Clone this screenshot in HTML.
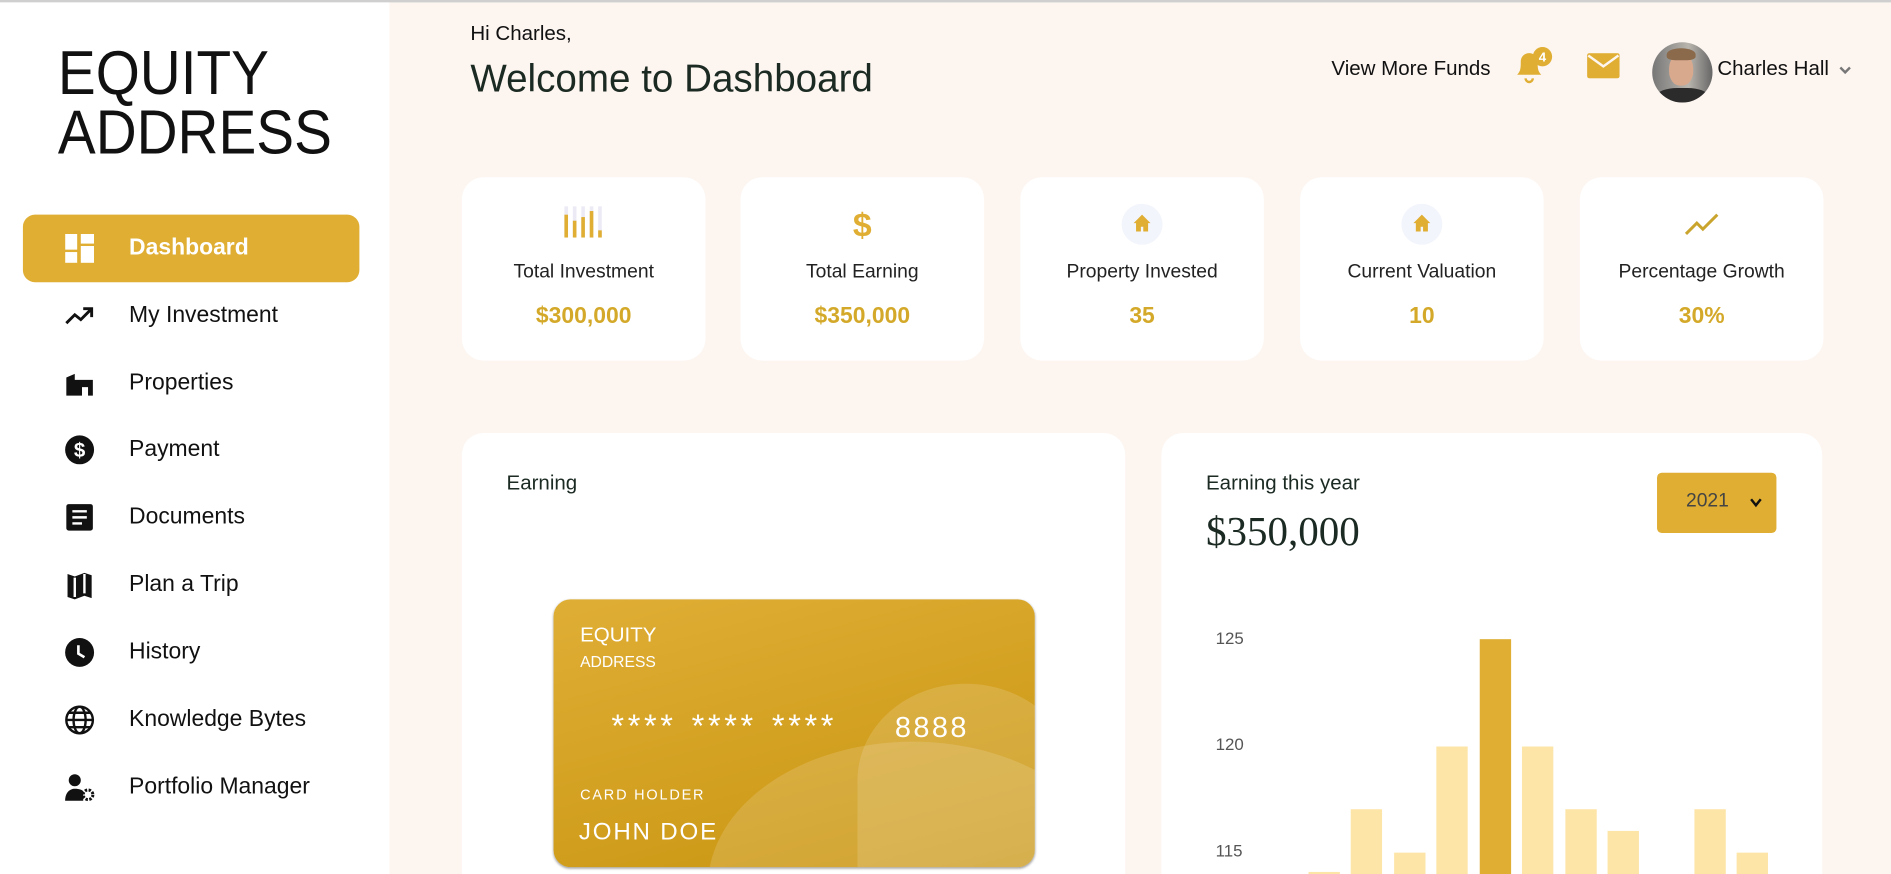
<!DOCTYPE html>
<html><head><meta charset="utf-8"><style>
*{margin:0;padding:0;box-sizing:border-box}
html,body{width:1891px;height:874px;overflow:hidden;background:#fdf5f0}
#w{position:absolute;left:0;top:0;width:1568px;height:725px;overflow:hidden;transform:scale(1.20599);transform-origin:0 0;font-family:"Liberation Sans",sans-serif;color:#111}
.a{position:absolute}
.side{left:0;top:2px;width:323px;height:723px;background:#fff}
.nav{position:absolute;left:107px;font-size:19px;color:#111;white-space:nowrap;transform:translateY(-50%)}
.ic{position:absolute;left:53px;width:26px;height:26px;transform:translateY(-50%)}
.card{position:absolute;background:#fff;border-radius:18px}
.st{top:147px;width:202px;height:152px;text-align:center}
.st .l{position:absolute;top:70px;width:100%;font-size:16px;color:#222}
.st .v{position:absolute;top:105px;width:100%;font-size:19px;font-weight:bold;color:#d4a92a}
.st svg{position:absolute;left:50%;top:24px;transform:translateX(-50%)}
.bar{position:absolute;width:26px;background:#fde5a8;bottom:0}
</style></head><body><div id="w">
<div class="a" style="left:0;top:0;width:1568px;height:2px;background:#cfcfcf"></div>
<div class="a side"></div>
<div class="a" style="left:48px;top:35px;font-size:47px;line-height:45px;color:#111;transform:scaleY(1.1);transform-origin:0 0">EQUITY<br>ADDRESS</div>
<div class="a" style="left:19px;top:178px;width:279px;height:56px;background:#dfae33;border-radius:10px"></div>
<svg class="a" style="left:54px;top:194px" width="24" height="24" viewBox="0 0 24 24" fill="#fff"><rect x="0" y="0" width="10" height="13"/><rect x="13" y="0" width="11" height="8"/><rect x="0" y="15" width="10" height="9"/><rect x="13" y="10" width="11" height="14"/></svg>
<div class="nav" style="top:206px;color:#fff;font-weight:bold">Dashboard</div>

<svg class="ic" style="top:262px" viewBox="0 0 26 26"><path d="M2 19l7-7 5 4 8-8M16 7h7v7" stroke="#111" stroke-width="2.4" fill="none"/></svg>
<div class="nav" style="top:262px">My Investment</div>
<svg class="ic" style="top:318px" viewBox="0 0 26 26" fill="#111"><path d="M2 8l7-3v18H2zM9 10h15v13h-4v-7h-5v7H9z"/></svg>
<div class="nav" style="top:318px">Properties</div>
<svg class="ic" style="top:373px" viewBox="0 0 26 26"><circle cx="13" cy="13" r="12" fill="#111"/><text x="13" y="19" font-size="17" font-weight="bold" fill="#fff" text-anchor="middle" font-family="Liberation Sans">$</text></svg>
<div class="nav" style="top:373px">Payment</div>
<svg class="ic" style="top:429px" viewBox="0 0 26 26"><rect x="2" y="2" width="22" height="22" rx="2" fill="#111"/><path d="M7 8h12M7 13h12M7 18h8" stroke="#fff" stroke-width="2"/></svg>
<div class="nav" style="top:429px">Documents</div>
<svg class="ic" style="top:485px" viewBox="0 0 26 26" fill="#111"><path d="M3 4l6 2 8-3 6 2v19l-6-2-8 3-6-2z"/><path d="M9 7v16M17 4v16" stroke="#fff" stroke-width="2"/></svg>
<div class="nav" style="top:485px">Plan a Trip</div>
<svg class="ic" style="top:541px" viewBox="0 0 26 26"><circle cx="13" cy="13" r="12" fill="#111"/><path d="M12 7v7l5 3" stroke="#fff" stroke-width="2.2" fill="none"/></svg>
<div class="nav" style="top:541px">History</div>
<svg class="ic" style="top:597px" viewBox="0 0 26 26" fill="none" stroke="#111" stroke-width="2"><circle cx="13" cy="13" r="11"/><ellipse cx="13" cy="13" rx="5" ry="11"/><path d="M2 13h22M4 7h18M4 19h18"/></svg>
<div class="nav" style="top:597px">Knowledge Bytes</div>
<svg class="ic" style="top:653px" viewBox="0 0 26 26" fill="#111"><circle cx="9" cy="7" r="5"/><path d="M1 24c0-7 4-10 8-10s6 1 7 2v8z"/><circle cx="20" cy="19" r="4" fill="none" stroke="#111" stroke-width="2.5" stroke-dasharray="2 1.2"/></svg>
<div class="nav" style="top:653px">Portfolio Manager</div>

<div class="a" style="left:390px;top:18px;font-size:17px;color:#111">Hi Charles,</div>
<div class="a" style="left:390px;top:47px;font-size:32px;color:#1b2a22">Welcome to Dashboard</div>
<div class="a" style="left:1104px;top:47px;font-size:17px;color:#111">View More Funds</div>
<svg class="a" style="left:1254px;top:38px" width="36" height="32" viewBox="0 0 36 32"><path d="M4 24c3-3 3-6 3-11a7 7 0 0 1 14 0c0 5 0 8 3 11z" fill="#dfae33"/><path d="M11 27a3 3 0 0 0 6 0" stroke="#dfae33" stroke-width="2" fill="none"/><circle cx="25" cy="9" r="8" fill="#dfae33"/><text x="25" y="13" font-size="11" font-weight="bold" fill="#fff" text-anchor="middle" font-family="Liberation Sans">4</text></svg>
<svg class="a" style="left:1316px;top:44px" width="27" height="21" viewBox="0 0 27 21"><rect width="27" height="21" rx="2" fill="#dfae33"/><path d="M1 2l12.5 9L26 2" stroke="#fdf5f0" stroke-width="2" fill="none"/></svg>
<div class="a" style="left:1370px;top:35px;width:50px;height:50px;border-radius:50%;background:linear-gradient(90deg,#777,#b9b5ae 60%,#666);overflow:hidden"><div class="a" style="left:14px;top:10px;width:20px;height:26px;border-radius:45%;background:#d9a98e"></div><div class="a" style="left:12px;top:5px;width:24px;height:10px;border-radius:50% 50% 30% 30%;background:#8a6a4a"></div><div class="a" style="left:4px;top:38px;width:42px;height:16px;background:#2b2b2b;border-radius:40% 40% 0 0"></div></div>
<div class="a" style="left:1424px;top:47px;font-size:17px;color:#111">Charles Hall</div>
<svg class="a" style="left:1524px;top:54px" width="12" height="8" viewBox="0 0 12 8"><path d="M2 2l4 4 4-4" stroke="#777" stroke-width="2" fill="none"/></svg>

<div class="card st" style="left:383px"><svg width="36" height="26" viewBox="0 0 36 26"><g fill="#eceaf5"><rect x="2" y="0" width="3" height="26"/><rect x="9" y="0" width="3" height="26"/><rect x="16" y="0" width="3" height="26"/><rect x="23" y="0" width="3" height="26"/><rect x="30" y="0" width="3" height="26"/></g><g fill="#dfae33"><rect x="2" y="7" width="3" height="19"/><rect x="9" y="12" width="3" height="14"/><rect x="16" y="9" width="3" height="17"/><rect x="23" y="4" width="3" height="22"/><rect x="30" y="20" width="3" height="6"/></g></svg><div class="l">Total Investment</div><div class="v">$300,000</div></div>
<div class="card st" style="left:614px"><svg width="20" height="30" viewBox="0 0 20 30"><text x="10" y="25" font-size="28" font-weight="bold" fill="#dfae33" text-anchor="middle" font-family="Liberation Sans">$</text></svg><div class="l">Total Earning</div><div class="v">$350,000</div></div>
<div class="card st" style="left:846px"><svg width="34" height="34" viewBox="0 0 34 34" style="top:22px"><ellipse cx="17" cy="17" rx="17" ry="17" fill="#f3f5fc"/><path d="M17 9l-7 7h2v7h4v-4h2v4h4v-7h2z" fill="#dfae33"/></svg><div class="l">Property Invested</div><div class="v">35</div></div>
<div class="card st" style="left:1078px"><svg width="34" height="34" viewBox="0 0 34 34" style="top:22px"><ellipse cx="17" cy="17" rx="17" ry="17" fill="#f3f5fc"/><path d="M17 9l-7 7h2v7h4v-4h2v4h4v-7h2z" fill="#dfae33"/></svg><div class="l">Current Valuation</div><div class="v">10</div></div>
<div class="card st" style="left:1310px"><svg width="30" height="22" viewBox="0 0 30 22" style="top:28px"><path d="M2 19l9-9 5 5 12-12" stroke="#c9a52e" stroke-width="2.5" fill="none"/></svg><div class="l">Percentage Growth</div><div class="v">30%</div></div>

<div class="a" style="left:383px;top:359px;width:550px;height:366px;background:#fff;border-radius:18px 18px 0 0"></div>
<div class="a" style="left:420px;top:391px;font-size:17px;color:#1b2a22">Earning</div>
<div class="a" style="left:459px;top:497px;width:399px;height:222px;border-radius:14px;overflow:hidden;background:linear-gradient(165deg,#dfae35,#c99510);box-shadow:0 1px 2px #999">
 <div class="a" style="left:128px;top:118px;width:340px;height:240px;border-radius:50%;background:rgba(255,255,255,.14)"></div>
 <div class="a" style="left:252px;top:70px;width:180px;height:160px;border-radius:50% 50% 0 0;background:rgba(255,255,255,.14)"></div>
 <div class="a" style="left:22px;top:20px;font-size:17px;color:#fff">EQUITY</div>
 <div class="a" style="left:22px;top:44px;font-size:13px;color:#fff">ADDRESS</div>
 <div class="a" style="left:48px;top:90px;font-size:27px;color:#fff;letter-spacing:3px;word-spacing:2px">**** **** ****</div>
 <div class="a" style="left:283px;top:93px;font-size:24px;color:#fff;letter-spacing:2px">8888</div>
 <div class="a" style="left:22px;top:155px;font-size:12px;color:#fff;letter-spacing:1.5px">CARD HOLDER</div>
 <div class="a" style="left:21px;top:182px;font-size:20px;color:#fff;letter-spacing:1.5px">JOHN DOE</div>
</div>

<div class="a" style="left:963px;top:359px;width:548px;height:366px;background:#fff;border-radius:18px 18px 0 0"></div>
<div class="a" style="left:1000px;top:391px;font-size:17px;color:#1b2a22">Earning this year</div>
<div class="a" style="left:1000px;top:423px;font-size:34px;color:#1b2a22;font-family:'Liberation Serif',serif">$350,000</div>
<div class="a" style="left:1374px;top:392px;width:99px;height:50px;border-radius:4px;background:#dfae33"></div>
<div class="a" style="left:1398px;top:407px;font-size:16px;color:#444">2021</div>
<svg class="a" style="left:1451px;top:413px" width="10" height="8" viewBox="0 0 10 8"><path d="M1 1l4 5 4-5" stroke="#111" stroke-width="2" fill="none"/></svg>
<div class="a" style="left:1008px;top:521px;font-size:14px;color:#555">125</div>
<div class="a" style="left:1008px;top:609px;font-size:14px;color:#555">120</div>
<div class="a" style="left:1008px;top:697px;font-size:14px;color:#555">115</div>
<div class="a" style="left:0;top:0;width:1568px;height:725px">
<div class="bar" style="left:1085px;height:2px"></div>
<div class="bar" style="left:1120px;height:54px"></div>
<div class="bar" style="left:1156px;height:18px"></div>
<div class="bar" style="left:1191px;height:106px"></div>
<div class="bar" style="left:1227px;height:195px;background:#dfae33"></div>
<div class="bar" style="left:1262px;height:106px"></div>
<div class="bar" style="left:1298px;height:54px"></div>
<div class="bar" style="left:1333px;height:36px"></div>
<div class="bar" style="left:1405px;height:54px"></div>
<div class="bar" style="left:1440px;height:18px"></div>
</div>
</div></body></html>
